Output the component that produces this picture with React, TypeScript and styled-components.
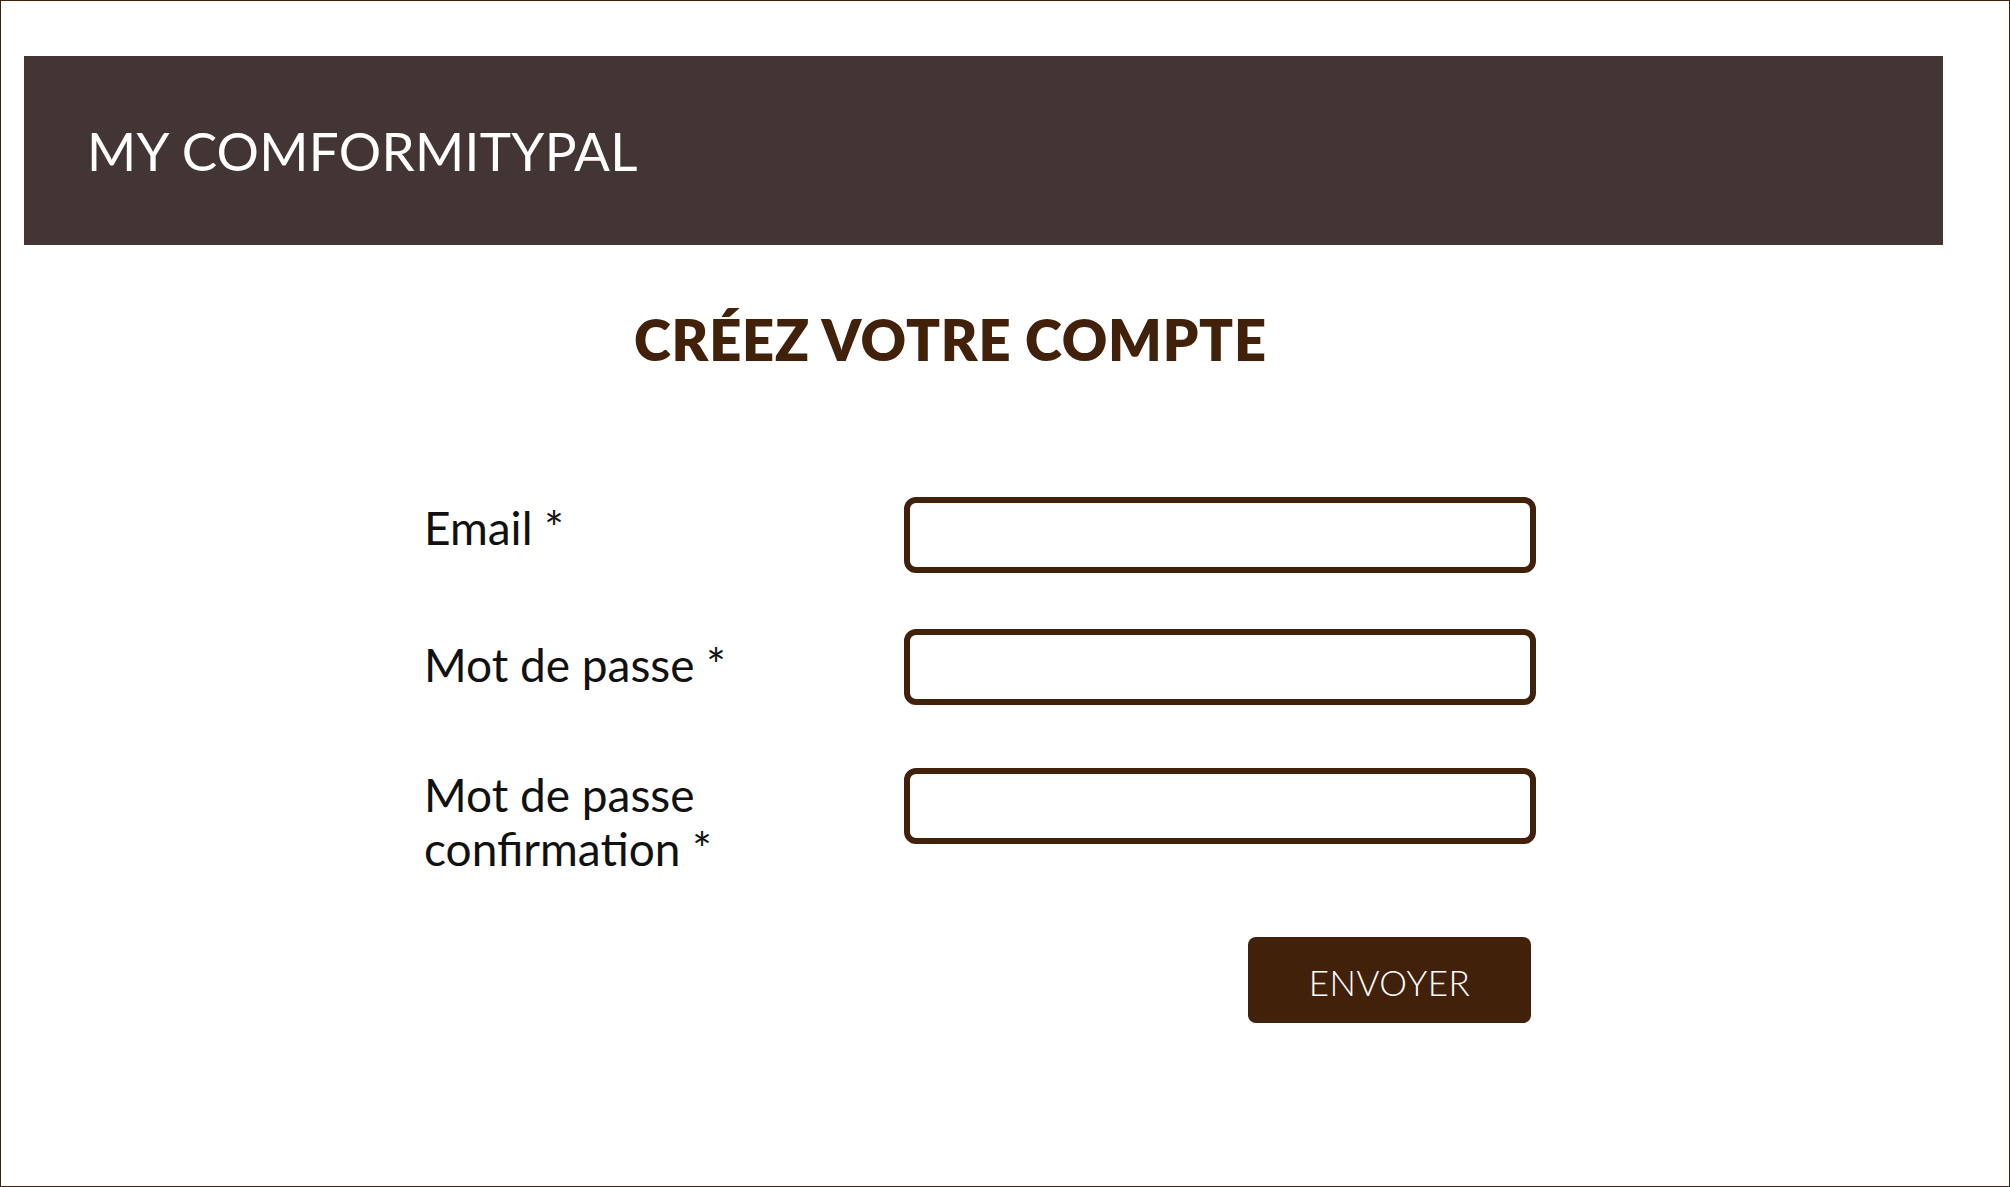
import React from 'react';
import styled, { createGlobalStyle } from 'styled-components';

const GlobalStyle = createGlobalStyle`
  html, body {
    margin: 0;
    padding: 0;
    background: #ffffff;
  }
  body {
    font-family: Lato, "Noto Sans", sans-serif;
  }
  * {
    box-sizing: border-box;
  }
`;

const Page = styled.div`
  width: 2010px;
  height: 1187px;
  border: 1px solid #42210b;
  padding-top: 55px;
  background: #ffffff;
`;

const Header = styled.header`
  display: flex;
  align-items: center;
  margin-left: 23px;
  width: 1919px;
  height: 189px;
  padding: 0 0 0 63px;
  background: #433533;
`;

const Brand = styled.div`
  color: #ffffff;
  font-size: 53px;
  font-weight: 400;
  line-height: 1;
  letter-spacing: 0.3px;
`;

const Main = styled.main`
  padding-left: 423px;
`;

const Title = styled.h1`
  margin: 67px 0 0 210px;
  color: #42210b;
  font-size: 56px;
  font-weight: 800;
  line-height: 1;
  letter-spacing: 0.8px;
`;

const Form = styled.form`
  display: flex;
  flex-direction: column;
  margin-top: 129px;
`;

const Row = styled.div<{ $gap: number }>`
  display: grid;
  grid-template-columns: 480px 632px;
  align-items: start;
  margin-top: ${(p) => p.$gap}px;
`;

const Label = styled.label<{ $offset: number }>`
  padding-top: ${(p) => p.$offset}px;
  color: #111111;
  font-size: 46px;
  font-weight: 400;
  line-height: 54px;
`;

const Input = styled.input`
  width: 632px;
  height: 76px;
  border: 6px solid #42210b;
  border-radius: 12px;
  padding: 0 16px;
  font-family: inherit;
  font-size: 30px;
  background: #ffffff;
  outline: none;
`;

const Actions = styled.div`
  display: flex;
  justify-content: flex-end;
  width: 1112px;
  margin-top: 61px;
  padding-right: 5px;
`;

const Button = styled.button`
  width: 283px;
  height: 86px;
  padding-top: 5px;
  border: none;
  border-radius: 8px;
  background: #42210b;
  color: #ffffff;
  font-family: inherit;
  font-size: 35px;
  font-weight: 300;
  letter-spacing: 0.5px;
  cursor: pointer;
`;

const fields = [
  { id: 'email', label: ['Email *'], type: 'email', gap: 0, offset: 4 },
  { id: 'password', label: ['Mot de passe *'], type: 'password', gap: 56, offset: 9 },
  { id: 'confirm', label: ['Mot de passe', 'confirmation *'], type: 'password', gap: 63, offset: 0 },
];

const App: React.FC = () => {
  return (
    <>
      <GlobalStyle />
      <Page>
        <Header>
          <Brand>MY COMFORMITYPAL</Brand>
        </Header>
        <Main>
          <Title>CRÉEZ VOTRE COMPTE</Title>
          <Form onSubmit={(e) => e.preventDefault()}>
            {fields.map((field) => (
              <Row key={field.id} $gap={field.gap}>
                <Label htmlFor={field.id} $offset={field.offset}>
                  {field.label.map((line, i) => (
                    <React.Fragment key={i}>
                      {i > 0 && <br />}
                      {line}
                    </React.Fragment>
                  ))}
                </Label>
                <Input id={field.id} type={field.type} />
              </Row>
            ))}
            <Actions>
              <Button type='submit'>ENVOYER</Button>
            </Actions>
          </Form>
        </Main>
      </Page>
    </>
  );
};

export default App;
